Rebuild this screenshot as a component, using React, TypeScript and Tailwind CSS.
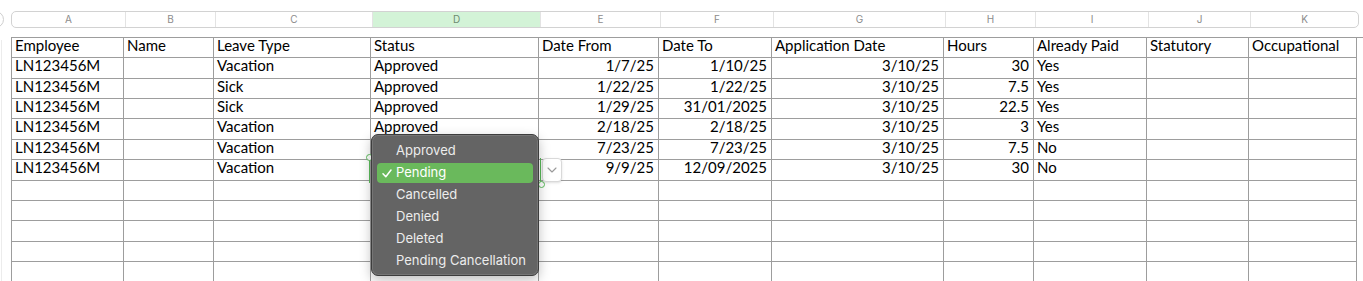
import React from "react";

const cols = [
  { key: "A", w: "w-[113px]" },
  { key: "B", w: "w-[90px]" },
  { key: "C", w: "w-[157px]" },
  { key: "D", w: "w-[168px]" },
  { key: "E", w: "w-[120px]" },
  { key: "F", w: "w-[113px]" },
  { key: "G", w: "w-[172px]" },
  { key: "H", w: "w-[90px]" },
  { key: "I", w: "w-[113px]" },
  { key: "J", w: "w-[102px]" },
  { key: "K", w: "w-[108px]" },
];

// right-aligned columns (dates and hours)
const numeric = [false, false, false, false, true, true, true, true, false, false, false];

const header = ["Employee", "Name", "Leave Type", "Status", "Date From", "Date To", "Application Date", "Hours", "Already Paid", "Statutory", "Occupational"];

// status of the last two rows sits under the open list, so it is left blank
const rows: string[][] = [
  ["LN123456M", "", "Vacation", "Approved", "1/7/25", "1/10/25", "3/10/25", "30", "Yes", "", ""],
  ["LN123456M", "", "Sick", "Approved", "1/22/25", "1/22/25", "3/10/25", "7.5", "Yes", "", ""],
  ["LN123456M", "", "Sick", "Approved", "1/29/25", "31/01/2025", "3/10/25", "22.5", "Yes", "", ""],
  ["LN123456M", "", "Vacation", "Approved", "2/18/25", "2/18/25", "3/10/25", "3", "Yes", "", ""],
  ["LN123456M", "", "Vacation", "", "7/23/25", "7/23/25", "3/10/25", "7.5", "No", "", ""],
  ["LN123456M", "", "Vacation", "", "9/9/25", "12/09/2025", "3/10/25", "30", "No", "", ""],
  ["", "", "", "", "", "", "", "", "", "", ""],
  ["", "", "", "", "", "", "", "", "", "", ""],
  ["", "", "", "", "", "", "", "", "", "", ""],
  ["", "", "", "", "", "", "", "", "", "", ""],
  ["", "", "", "", "", "", "", "", "", "", ""],
];

const rowHeights = ["h-[20px]", "h-[21px]", "h-[20px]", "h-[20px]", "h-[21px]", "h-[20px]", "h-[21px]", "h-[20px]", "h-[20px]", "h-[21px]", "h-[20px]", "h-[20px]"];

const options = ["Approved", "Pending", "Cancelled", "Denied", "Deleted", "Pending Cancellation"];

function Row({ cells, h, isHeader }: { cells: string[]; h: string; isHeader?: boolean }) {
  return (
    <div className={`flex ${h}`}>
      {cells.map((c, i) => (
        <div
          key={i}
          className={`${cols[i].w} shrink-0 border-r border-b border-[#9d9d9d] px-[3px] leading-[19px] whitespace-nowrap ${
            !isHeader && numeric[i] ? "text-right pr-[4px]" : "text-left"
          } ${i === 0 ? "border-l" : ""}`}
        >
          <span className="block -mt-[2px]">{c}</span>
        </div>
      ))}
    </div>
  );
}

export default function App() {
  return (
    <div className="relative w-[1363px] h-[281px] overflow-hidden bg-white text-black">
      {/* column letters */}
      <div className="flex mt-[11px] h-[17px]">
        <div className="w-[17px] h-[17px] -ml-[13px] mr-[7px] rounded-full border border-[#cfcfcf]" />
        <div className="flex rounded-[5px] border border-[#d2d2d2] overflow-hidden font-['Inter',sans-serif] text-[10px] text-[#8c8c8c]">
          {cols.map((c, i) => (
            <div
              key={c.key}
              className={`${c.w} shrink-0 flex items-center justify-center ${i > 0 ? "border-l border-[#e3e3e3]" : ""} ${
                c.key === "D" ? "bg-[#d3f3d7] text-[#6d8a70]" : ""
              }`}
            >
              {c.key}
            </div>
          ))}
        </div>
      </div>

      {/* sheet */}
      <div className="ml-[11px] mt-[9px] border-t border-[#9d9d9d] font-['Lato',sans-serif] text-[15px]">
        <Row cells={header} h={rowHeights[0]} isHeader />
        {rows.map((r, i) => (
          <Row key={i} cells={r} h={rowHeights[i + 1]} />
        ))}
      </div>

      {/* faint row header edge */}
      <div className="absolute left-[1px] top-[40px] w-px h-[241px] bg-[#ececec]" />

      {/* selected cell D7 */}
      <div className="absolute left-[369px] top-[158px] w-[172px] h-[25px] border-x border-[#5bbd5b]" />
      <div className="absolute left-[366px] top-[154px] w-[7px] h-[7px] rounded-full border border-[#5bbd5b] bg-white" />
      <div className="absolute left-[538px] top-[181px] w-[7px] h-[7px] rounded-full border border-[#5bbd5b] bg-white" />
      <div className="absolute left-[542px] top-[158px] w-[20px] h-[24px] rounded-[4px] border border-[#d9d9d9] bg-white shadow-sm flex items-center justify-center">
        <svg width="10" height="6" viewBox="0 0 10 6" fill="none">
          <path d="M1 1l4 4 4-4" stroke="#9a9a9a" strokeWidth="1.1" strokeLinecap="round" strokeLinejoin="round" />
        </svg>
      </div>

      {/* validation popup */}
      <div className="absolute left-[371px] top-[134px] w-[168px] h-[142px] rounded-[7px] border border-[#3d3d3d] bg-[#646464] shadow-[inset_0_0_0_1px_rgba(255,255,255,0.12),0_4px_12px_rgba(0,0,0,0.25)] pt-[5px] px-[5px] font-['Inter',sans-serif] text-[13px] text-[#ececec]">
        {options.map((o) => (
          <div key={o} className="h-[22px] py-px">
            <div
              className={`relative h-full flex items-center pl-[19px] rounded-[4px] ${
                o === "Pending" ? "bg-[#6ab95c] text-white" : ""
              }`}
            >
              {o === "Pending" && (
                <svg className="absolute left-[5px] top-[6px]" width="10" height="9" viewBox="0 0 10 9" fill="none">
                  <path d="M1 4.8l2.8 3L9 1" stroke="white" strokeWidth="1.5" strokeLinecap="round" strokeLinejoin="round" />
                </svg>
              )}
              {o}
            </div>
          </div>
        ))}
      </div>
    </div>
  );
}
